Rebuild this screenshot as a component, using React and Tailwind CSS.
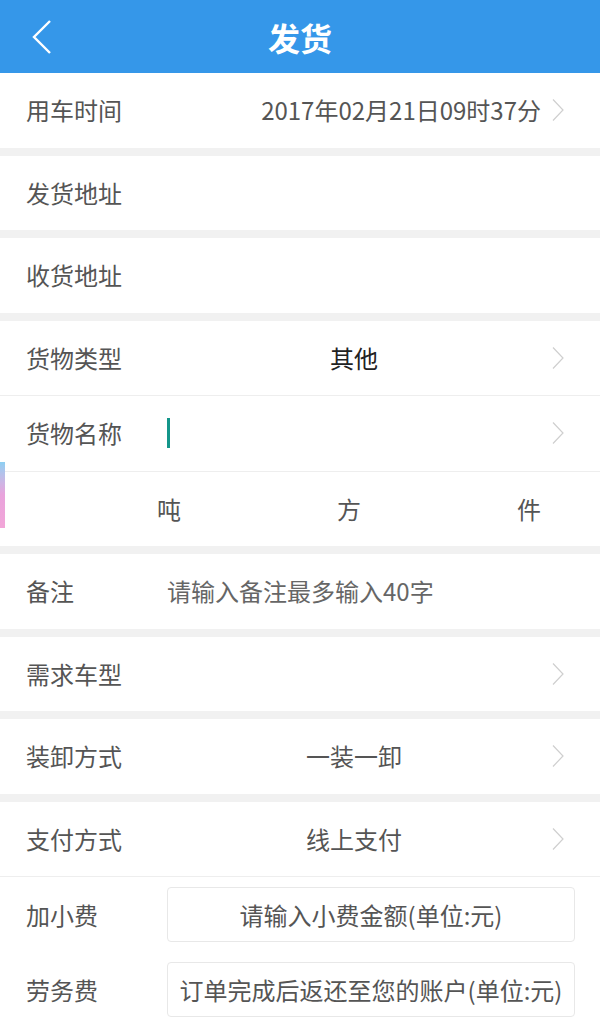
import React from "react";

const font = { fontFamily: '"Noto Sans CJK SC", "Noto Sans", sans-serif' };

function Chevron() {
  return (
    <svg width="12" height="24" viewBox="0 0 12 24" className="shrink-0 ml-[11px]">
      <polyline points="1,1.5 11,12 1,22.5" fill="none" stroke="#cfcfcf" strokeWidth="1.2" />
    </svg>
  );
}

function Gap() {
  return <div className="h-[8px] bg-[#f1f1f1]" />;
}

function Row({ label, children, arrow = true, divider = false }) {
  return (
    <div className={`h-[74.5px] flex items-center bg-white pl-[26px] pr-[36px] ${divider ? "border-b border-[#eeeeee] box-content" : ""}`}>
      <div className="w-[141px] shrink-0 text-[#555]">{label}</div>
      <div className="flex-1 flex items-center">{children}</div>
      {arrow ? <Chevron /> : <div className="w-[12px] ml-[11px]" />}
    </div>
  );
}

function FeeRow({ label, placeholder }) {
  return (
    <div className="h-[75px] flex items-center bg-white pl-[26px] pr-[25px]">
      <div className="w-[141px] shrink-0 text-[#555]">{label}</div>
      <div className="flex-1 h-[55px] border border-[#e8e8e8] rounded-[4px] flex items-center justify-center text-[#555] whitespace-nowrap">
        {placeholder}
      </div>
    </div>
  );
}

export default function App() {
  return (
    <div className="w-[600px] h-[1027px] bg-[#f1f1f1] text-[24px] relative overflow-hidden" style={font}>
      {/* header */}
      <div className="h-[73px] bg-[#3597e9] relative flex items-center justify-center">
        <svg width="22" height="36" viewBox="0 0 22 36" className="absolute left-[31px] top-[19px]">
          <polyline points="19,2 3,18 19,34" fill="none" stroke="#ffffff" strokeWidth="2.4" />
        </svg>
        <span className="text-white text-[32px] font-bold">发货</span>
      </div>

      <Row label="用车时间">
        <span className="flex-1 text-right text-[#555] whitespace-nowrap">2017年02月21日09时37分</span>
      </Row>
      <Gap />
      <Row label="发货地址" arrow={false} />
      <Gap />
      <Row label="收货地址" arrow={false} />
      <Gap />
      <Row label="货物类型" divider>
        <span className="flex-1 text-center text-[#222]">其他</span>
      </Row>
      <Row label="货物名称" divider>
        <span className="w-[3px] h-[30px] bg-[#14968a]" />
      </Row>
      <div className="h-[74.5px] bg-white flex items-center pl-[157px] text-[#555]">
        <span className="w-[180px]">吨</span>
        <span className="w-[180px]">方</span>
        <span className="w-[80px]">件</span>
      </div>
      <Gap />
      <Row label="备注" arrow={false}>
        <span className="text-[#666]">请输入备注最多输入40字</span>
      </Row>
      <Gap />
      <Row label="需求车型" />
      <Gap />
      <Row label="装卸方式">
        <span className="flex-1 text-center text-[#555]">一装一卸</span>
      </Row>
      <Gap />
      <Row label="支付方式" divider>
        <span className="flex-1 text-center text-[#555]">线上支付</span>
      </Row>
      <FeeRow label="加小费" placeholder="请输入小费金额(单位:元)" />
      <FeeRow label="劳务费" placeholder="订单完成后返还至您的账户(单位:元)" />

      {/* edge overlay strip */}
      <div className="absolute left-0 top-[462px] w-[5px] h-[66px] bg-gradient-to-b from-[#8ccff2] via-[#e9a3dc] to-[#f2a6d8]" />
    </div>
  );
}
